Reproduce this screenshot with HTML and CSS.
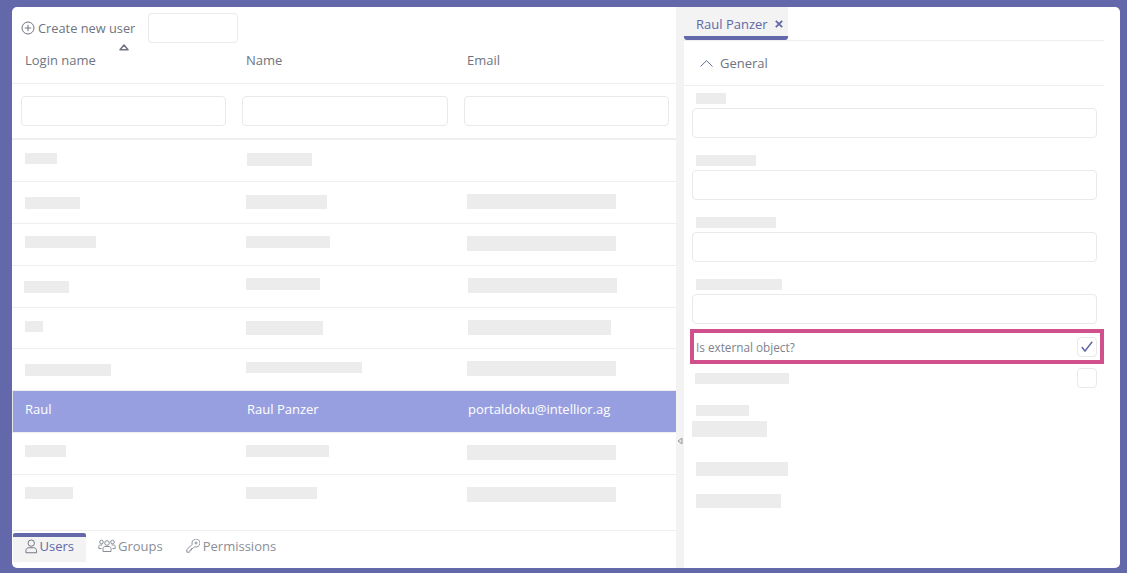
FILE: index.html
```html
<!DOCTYPE html>
<html lang="en">
<head>
  <meta charset="UTF-8">
  <title>Users</title>
  <link rel="stylesheet" href="styles.css">
</head>
<body>
  <div class="app">
    <section class="left">
      <div class="toolbar">
        <span class="create">
          <svg class="create-icon" viewBox="0 0 14 14"><circle cx="7" cy="7" r="6" /><path d="M7 3.800v6.400M3.800 7h6.400" /></svg>
          Create new user
        </span>
        <span class="box search"></span>
        <svg class="sort" viewBox="0 0 10 7"><path d="M5 1 9 5.800H1Z" /></svg>
      </div>
      <div class="row head">
        <div>Login name</div>
        <div>Name</div>
        <div>Email</div>
      </div>
      <div class="filters">
        <span class="box"></span>
        <span class="box"></span>
        <span class="box"></span>
      </div>
      <div class="rows">
        <div class="row">
          <div><i class="bar" style="width:32px;height:11px;margin-top:13px"></i></div>
          <div><i class="bar" style="width:65px;height:13px;margin:13px 0 0 1px"></i></div>
          <div></div>
        </div>
        <div class="row">
          <div><i class="bar" style="width:55px;margin-top:15px"></i></div>
          <div><i class="bar" style="width:81px;height:14px;margin-top:13px"></i></div>
          <div><i class="bar big" style="width:149px;margin-top:12px"></i></div>
        </div>
        <div class="row">
          <div><i class="bar" style="width:71px;margin-top:12px"></i></div>
          <div><i class="bar" style="width:84px;margin-top:12px"></i></div>
          <div><i class="bar big" style="width:149px;margin-top:12px"></i></div>
        </div>
        <div class="row">
          <div><i class="bar" style="width:45px;margin:15px 0 0 -1px"></i></div>
          <div><i class="bar" style="width:74px;margin-top:12px"></i></div>
          <div><i class="bar big" style="width:149px;margin:12px 0 0 1px"></i></div>
        </div>
        <div class="row short">
          <div><i class="bar" style="width:18px;height:11px;margin-top:13px"></i></div>
          <div><i class="bar" style="width:77px;height:14px;margin-top:13px"></i></div>
          <div><i class="bar big" style="width:143px;margin:12px 0 0 1px"></i></div>
        </div>
        <div class="row">
          <div><i class="bar" style="width:86px;margin-top:15px"></i></div>
          <div><i class="bar" style="width:116px;height:11px;margin-top:13px"></i></div>
          <div><i class="bar big" style="width:149px;margin-top:12px"></i></div>
        </div>
        <div class="row selected">
          <div>Raul</div>
          <div class="nudge">Raul Panzer</div>
          <div class="nudge">portaldoku@intellior.ag</div>
        </div>
        <div class="row">
          <div><i class="bar" style="width:41px;margin-top:12px"></i></div>
          <div><i class="bar" style="width:83px;margin-top:12px"></i></div>
          <div><i class="bar big" style="width:149px;margin-top:12px"></i></div>
        </div>
        <div class="row last">
          <div><i class="bar" style="width:48px;margin-top:12px"></i></div>
          <div><i class="bar" style="width:71px;margin-top:12px"></i></div>
          <div><i class="bar big" style="width:149px;margin-top:12px"></i></div>
        </div>
      </div>
      <nav class="tabs">
        <span class="tab active">
          <svg viewBox="0 0 13 15"><circle cx="6.500" cy="4" r="3.300" /><path d="M1 14v-2.200c0-1.800 1.300-3 3-3h5c1.700 0 3 1.200 3 3V14Z" /></svg>
          Users
        </span>
        <span class="tab">
          <svg class="wide" viewBox="0 0 18 14"><circle cx="9" cy="4" r="2.300" /><circle cx="3.500" cy="3" r="1.800" /><circle cx="14.500" cy="3" r="1.800" /><path d="M5 12.500V9.500c0-1 .8-2 2-2h4c1.200 0 2 1 2 2v3ZM3.500 9.500H.8V7.500c0-1 .7-1.500 1.500-1.500h2.200M14.500 9.500h2.700V7.500c0-1-.7-1.500-1.500-1.500h-2.200" /></svg>
          Groups
        </span>
        <span class="tab perm">
          <svg class="key" viewBox="0 0 14 14"><path d="M.8 13.200v-2.500L6.200 5.300A4 4 0 1 1 8.700 7.800L7 9.500H5.500V11H4v1.500l-.7.700Z" /><circle cx="10" cy="4" r="1" /></svg>
          Permissions
        </span>
      </nav>
    </section>

    <div class="splitter">
      <svg class="grip" viewBox="0 0 6 8"><path d="M5 1v6L1 4Z" /></svg>
    </div>

    <section class="right">
      <div class="detail-tabs">
        <span class="detail-tab">
          Raul Panzer
          <svg viewBox="0 0 8 8"><path d="M.8.800l6.400 6.400M7.200.800.800 7.200" /></svg>
        </span>
      </div>
      <div class="section-head">
        <svg viewBox="0 0 13 7"><path d="M.5 6.500 6.500.7l6 5.800" /></svg>
        General
      </div>
      <div class="form">
        <div class="field"><i class="bar label" style="width:30px"></i><span class="box"></span></div>
        <div class="field"><i class="bar label" style="width:60px"></i><span class="box"></span></div>
        <div class="field"><i class="bar label" style="width:80px"></i><span class="box"></span></div>
        <div class="field end"><i class="bar label" style="width:86px"></i><span class="box"></span></div>
        <div class="check-row marked">
          <span class="check-label">Is external object?</span>
          <span class="box check">
            <svg viewBox="0 0 12 11"><path d="M.8 6 4 10 11.200.8" /></svg>
          </span>
        </div>
        <div class="check-row plain">
          <i class="bar label" style="width:94px"></i>
          <span class="box check"></span>
        </div>
        <div class="readonly">
          <i class="bar label" style="width:53px"></i>
          <i class="bar value" style="width:75px"></i>
        </div>
        <i class="bar extra first-extra" style="width:92px"></i>
        <i class="bar extra" style="width:85px"></i>
      </div>
    </section>
  </div>
</body>
</html>
```

FILE: styles.css
```css
* {
  box-sizing: border-box;
}
body {
  margin: 0;
  height: 573px;
  padding: 7px 7px 5px 12px;
  background: #6268a9;
  font-family: "Open Sans", sans-serif;
  font-size: 13px;
  color: #6f7480;
  overflow: hidden;
}
.app {
  display: flex;
  height: 561px;
  background: #fff;
  border-radius: 5px;
  overflow: hidden;
}
.box {
  display: block;
  background: #fff;
  border: 1px solid #e9e9e9;
  border-radius: 4px;
}
.bar {
  display: block;
  height: 12px;
  background: #ececec;
}
.bar.big {
  height: 15px;
}

/* linke Seite: Tabelle */
.left {
  width: 664px;
  display: flex;
  flex-direction: column;
}
.toolbar {
  position: relative;
  height: 37px;
  display: flex;
  align-items: flex-start;
  padding: 6px 0 0 9px;
}
.create {
  display: flex;
  align-items: center;
  gap: 3px;
  height: 30px;
  width: 127px;
  font-size: 12.800px;
}
.create-icon {
  width: 14px;
  height: 14px;
  fill: none;
  stroke: #6f7480;
  stroke-width: 1;
}
.search {
  width: 90px;
  height: 30px;
}
.sort {
  position: absolute;
  left: 107px;
  top: 37px;
  width: 10px;
  height: 7px;
  fill: #fff;
  stroke: #6f7480;
  stroke-width: 1.500;
  stroke-linejoin: round;
}
.row {
  display: grid;
  grid-template-columns: 221px 221px 1fr;
  align-items: start;
  height: 42px;
  padding-left: 13px;
  border-bottom: 1px solid #eeeeee;
}
.row.head {
  height: 40px;
  padding-top: 7px;
}
.filters {
  display: grid;
  grid-template-columns: 205px 206px 205px;
  gap: 16px;
  height: 56px;
  padding: 12px 7px 0 9px;
  border-bottom: 2px solid #eeeeee;
}
.filters .box {
  height: 30px;
}
.rows {
  flex: 1;
}
.row.short {
  height: 41px;
}
.row.selected {
  padding: 9px 0 0 12px;
  background: #989fe0;
  color: #fff;
  border-left: 1px solid #e5e5e5;
}
.nudge {
  padding-left: 1px;
}
.row.last {
  border-bottom: 0;
}
.tabs {
  height: 38px;
  display: flex;
  padding: 2px 0 0 1px;
  border-top: 1px solid #eeeeee;
  color: #8a8e98;
}
.tab {
  display: flex;
  align-items: center;
  gap: 2px;
  height: 29px;
  padding: 0 12px 7px;
  border-top: 4px solid transparent;
}
.tab svg {
  width: 13px;
  height: 15px;
  fill: none;
  stroke: #8a8e98;
  stroke-width: 1;
}
.tab svg.wide {
  width: 18px;
  height: 14px;
}
.tab svg.key {
  width: 14px;
  height: 14px;
}
.tab.perm {
  padding-left: 11px;
  gap: 3px;
}
.tab.active {
  width: 73px;
  background: #f3f3f3;
  border-top-color: #6268a9;
  border-radius: 2px 2px 0 0;
  color: #6268a9;
}
.tab.active svg {
  stroke: #6f7480;
}

/* Griff zwischen den Seiten */
.splitter {
  width: 8px;
  background: #f3f3f3;
  display: flex;
  align-items: center;
  justify-content: center;
  padding-top: 306px;
}
.grip {
  width: 6px;
  height: 8px;
  fill: #e8e8e8;
  stroke: #9a9a9a;
  stroke-width: 1;
}

/* rechte Seite: Details */
.right {
  flex: 1;
  padding-right: 16px;
}
.detail-tabs {
  height: 34px;
  border-bottom: 1px solid #eeeeee;
}
.detail-tab {
  display: flex;
  align-items: center;
  gap: 7px;
  width: 104px;
  height: 33px;
  padding: 4px 0 0 12px;
  background: #f3f3f3;
  border-bottom: 4px solid #6268a9;
  border-radius: 0 0 3px 3px;
  color: #6268a9;
}
.detail-tab svg {
  width: 8px;
  height: 8px;
  fill: none;
  stroke: #6268a9;
  stroke-width: 1.800;
}
.section-head {
  display: flex;
  align-items: center;
  gap: 7px;
  height: 45px;
  padding-left: 16px;
  border-bottom: 1px solid #eeeeee;
}
.section-head svg {
  width: 13px;
  height: 7px;
  fill: none;
  stroke: #5f6f8c;
  stroke-width: 1;
}
.form {
  padding: 7px 0 0 8px;
}
.field {
  height: 62px;
}
.field.end {
  height: 45px;
}
.field .label {
  margin: 0 0 4px 4px;
  height: 11px;
}
.field .box {
  width: 405px;
  height: 30px;
}
.check-row {
  display: flex;
  align-items: center;
  justify-content: space-between;
}
.check {
  width: 20px;
  height: 20px;
  display: flex;
  align-items: center;
  justify-content: center;
}
.check svg {
  width: 12px;
  height: 11px;
  fill: none;
  stroke: #6268a9;
  stroke-width: 1.500;
}
.marked {
  width: 414px;
  height: 35px;
  margin: 5px 0 0 -2px;
  padding: 0 3px 0 2px;
  border: 4px solid #d0508c;
}
.check-label {
  font-size: 11.750px;
  color: #7d828d;
}
.plain {
  width: 405px;
  height: 20px;
  margin-top: 4px;
  padding-left: 3px;
}
.plain .label {
  height: 11px;
  margin-top: 1px;
}
.readonly {
  margin-top: 17px;
}
.readonly .label {
  margin-left: 4px;
  height: 11px;
}
.readonly .value {
  height: 16px;
  margin-top: 5px;
}
.extra {
  height: 14px;
  margin: 18px 0 0 4px;
}
.first-extra {
  margin-top: 25px;
}
```
